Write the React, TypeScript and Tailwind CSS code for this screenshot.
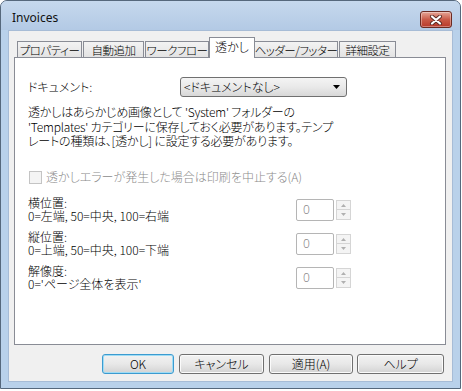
import React from 'react'

const jp = "font-['Noto_Sans_CJK_JP','Noto_Sans',sans-serif] [font-feature-settings:'palt'] text-[12px] font-light"

const tabs = [
  { label: 'プロパティー', w: 'w-[65px]' },
  { label: '自動追加', w: 'w-[61px]' },
  { label: 'ワークフロー', w: 'w-[64px]' },
  { label: '透かし', w: 'w-[46px]', active: true },
  { label: 'ヘッダー/フッター', w: 'w-[84px]' },
  { label: '詳細設定', w: 'w-[57px]' },
]

const CloseButton = () => (
  <div className="flex h-[17px] w-[32px] items-center justify-center rounded-[3px] border border-[#6b2a22] bg-gradient-to-b from-[#e4a597] via-[#c95a48] to-[#b8382a] shadow-[inset_0_0_0_1px_rgba(255,255,255,0.35)]">
    <svg width="14" height="10" viewBox="0 0 14 10">
      <path d="M3 1.5 L11 8.5 M11 1.5 L3 8.5" stroke="#5a2a24" strokeWidth="4" strokeLinecap="round" />
      <path d="M3 1.5 L11 8.5 M11 1.5 L3 8.5" stroke="#ffffff" strokeWidth="2.2" strokeLinecap="round" />
    </svg>
  </div>
)

const Spinner = () => (
  <div className="flex items-start gap-[2px]">
    <div className="flex h-[22px] w-[38px] items-center rounded-[2px] border border-[#b5b5b5] bg-white pl-[6px] text-[12px] text-[#8a8a8a] font-['Noto_Sans',sans-serif]">
      0
    </div>
    <div className="mt-[1px] flex flex-col">
      <div className="flex h-[10px] w-[15px] items-center justify-center border border-[#d5d5d5] bg-[#f4f4f4]">
        <svg width="5" height="3" viewBox="0 0 5 3"><path d="M0 3 L2.5 0 L5 3 Z" fill="#b0b0b0" /></svg>
      </div>
      <div className="flex h-[10px] w-[15px] items-center justify-center border border-t-0 border-[#d5d5d5] bg-[#f4f4f4]">
        <svg width="5" height="3" viewBox="0 0 5 3"><path d="M0 0 L5 0 L2.5 3 Z" fill="#b0b0b0" /></svg>
      </div>
    </div>
  </div>
)

const SpinRow = ({ title, desc }: { title: string; desc: string }) => (
  <div className="flex items-center">
    <div className="-mt-[2px] w-[268px] leading-[13.5px]">
      <div>{title}</div>
      <div>{desc}</div>
    </div>
    <Spinner />
  </div>
)

const DialogButton = ({ label, w, primary }: { label: string; w: string; primary?: boolean }) => (
  <button
    className={`${w} h-[20px] rounded-[3px] border bg-gradient-to-b from-[#f2f2f2] via-[#e8e8e8] to-[#d3d3d3] text-[12px] leading-none text-black ${
      primary ? 'border-[#3c9bd0] shadow-[inset_0_0_0_1px_#9fdcf5]' : 'border-[#707070] shadow-[inset_0_0_0_1px_#fbfbfb]'
    }`}
  >
    {label}
  </button>
)

export default function App() {
  return (
    <div className={`h-[391px] w-[462px] bg-white ${jp}`}>
      <div className="flex h-[389px] w-[461px] flex-col rounded-t-[7px] border border-[#56687c] bg-[#b9d1ea]">
        <header className="flex h-[29px] items-start justify-between rounded-t-[6px] bg-gradient-to-b from-[#c6d8ed] to-[#b3cae5] pl-[11px] pr-[8px]">
          <span className="mt-[9px] font-['Noto_Sans',sans-serif] font-normal text-[12px] leading-[16px] text-[#111]">Invoices</span>
          <div className="mt-[10px]">
            <CloseButton />
          </div>
        </header>

        <div className="mx-[7px] flex h-[352px] flex-col border border-[#a7bcd6] bg-[#f0f0f0] pl-[5px] pr-[7px] pt-[7px]">
          <div className="relative z-10 flex h-[19px] items-end pl-[3px]">
            {tabs.map((t) =>
              t.active ? (
                <div
                  key={t.label}
                  className={`${t.w} -mb-px -mx-[1px] flex h-[21px] items-start justify-center border border-b-0 border-[#898c95] bg-white pt-[1px] text-[12px] leading-[16px]`}
                >
                  {t.label}
                </div>
              ) : (
                <div
                  key={t.label}
                  className={`${t.w} mr-[1px] flex h-[16px] items-center justify-center overflow-hidden whitespace-nowrap border border-b-0 border-[#898c95] bg-gradient-to-b from-[#f3f3f3] to-[#e3e3e3] text-[11.5px] leading-[14px] tracking-[-0.5px]`}
                >
                  {t.label}
                </div>
              ),
            )}
          </div>

          <section className="flex h-[288px] w-[432px] flex-col border border-[#898c95] bg-white pl-[13px] pt-[19px] text-black">
            <div className="flex items-center">
              <span className="w-[152px]">ドキュメント:</span>
              <div className="flex h-[20px] w-[167px] items-center justify-between rounded-[3px] border border-[#707070] bg-gradient-to-b from-[#f4f4f4] via-[#e9e9e9] to-[#d8d8d8] pl-[3px] pr-[6px]">
                <span className="leading-[14px]">&lt;ドキュメントなし&gt;</span>
                <svg width="7" height="4" viewBox="0 0 7 4"><path d="M0 0 L7 0 L3.5 4 Z" fill="#000" /></svg>
              </div>
            </div>

            <p className="mt-[8px] leading-[14.5px] tracking-[-0.2px]">
              透かしはあらかじめ画像として 'System' フォルダーの
              <br />
              'Templates' カテゴリーに保存しておく必要があります。テンプ
              <br />
              レートの種類は、[透かし] に設定する必要があります。
            </p>

            <label className="mt-[22px] flex h-[13px] items-center pl-[1px] text-[#8b8b8b]">
              <span className="mr-[4px] h-[13px] w-[13px] border border-[#c4c4c4] bg-[#f4f4f4]" />
              透かしエラーが発生した場合は印刷を中止する(A)
            </label>

            <div className="mt-[14px] flex flex-col gap-[9px]">
              <SpinRow title="横位置:" desc="0=左端, 50=中央, 100=右端" />
              <SpinRow title="縦位置:" desc="0=上端, 50=中央, 100=下端" />
              <SpinRow title="解像度:" desc="0='ページ全体を表示'" />
            </div>
          </section>

          <div className="mt-[9px] flex pl-[88px]">
            <DialogButton label="OK" w="w-[72px]" primary />
            <div className="ml-[5px]"><DialogButton label="キャンセル" w="w-[85px]" /></div>
            <div className="ml-[5px]"><DialogButton label="適用(A)" w="w-[84px]" /></div>
            <div className="ml-[4px]"><DialogButton label="ヘルプ" w="w-[87px]" /></div>
          </div>
        </div>
      </div>
    </div>
  )
}
